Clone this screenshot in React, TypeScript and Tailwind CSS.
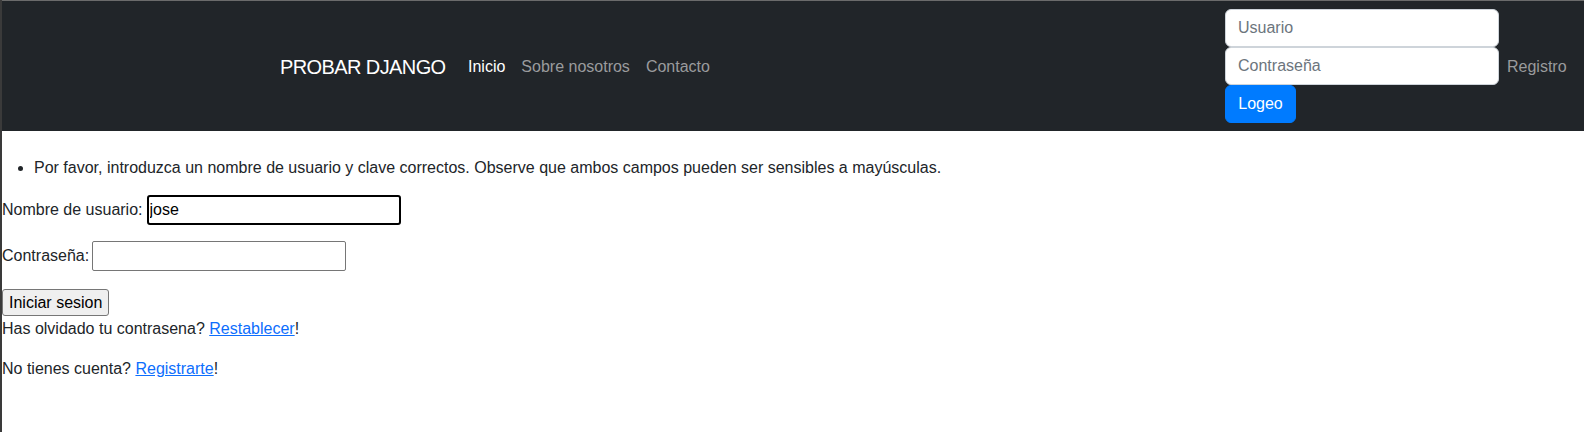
import React from 'react';

const FONT = { fontFamily: '"Liberation Sans", Arial, sans-serif' };

export default function App() {
  return (
    <div className="min-h-[432px] bg-white text-[#212529] text-[16px] leading-6 border-l-2 border-[#3a3a3a]" style={FONT}>
      <nav className="h-[131px] bg-[#212529] border-t border-[#6b6b6b] flex items-center justify-between pl-[278px] pr-[17px]">
        <div className="flex items-center mt-[2px]">
          <a className="w-[180px] shrink-0 whitespace-nowrap text-[20px] leading-[30px] tracking-[-0.6px] text-white">PROBAR DJANGO</a>
          <a className="px-2 text-white">Inicio</a>
          <a className="px-2 text-[#9a9b9d]">Sobre nosotros</a>
          <a className="px-2 text-[#9a9b9d]">Contacto</a>
        </div>
        <div className="flex items-center">
          <form className="flex flex-col w-[274px] items-start">
            <input
              placeholder="Usuario"
              className="w-full h-[38px] px-3 bg-white border border-[#ced4da] rounded-[6px] placeholder:text-[#6c757d] outline-none"
            />
            <input
              placeholder="Contraseña"
              type="password"
              className="w-full h-[38px] px-3 bg-white border border-[#ced4da] rounded-[6px] placeholder:text-[#6c757d] outline-none"
            />
            <button type="button" className="h-[38px] w-[71px] bg-[#007bff] border border-[#007bff] rounded-[6px] text-white">
              Logeo
            </button>
          </form>
          <a className="ml-2 mt-[2px] w-[60px] whitespace-nowrap text-[#9a9b9d]">Registro</a>
        </div>
      </nav>

      <ul className="list-disc pl-8 mt-[25px] mb-4">
        <li>Por favor, introduzca un nombre de usuario y clave correctos. Observe que ambos campos pueden ser sensibles a mayúsculas.</li>
      </ul>

      <p className="mb-4 -mt-[1px] flex items-center h-[30px]">
        <label>Nombre de usuario:</label>
        <input
          defaultValue="jose"
          className="ml-[4px] w-[254px] h-[30px] px-[1px] border-2 border-black rounded-[3px] outline-none text-black"
        />
      </p>

      <p className="mb-4 flex items-center h-[30px]">
        <label>Contraseña:</label>
        <input
          type="password"
          className="ml-[3px] w-[254px] h-[30px] px-[2px] border border-[#767676] rounded-[2px] outline-none"
        />
      </p>

      <button type="button" className="mt-[2px] h-[27px] px-[6px] bg-[#efefef] border border-[#767676] rounded-[3px] text-black leading-5">
        Iniciar sesion
      </button>
      <p className="mb-4 mt-[1px]">
        Has olvidado tu contrasena? <a className="text-[#0d6efd] underline">Restablecer</a>!
      </p>
      <p className="mb-4">
        No tienes cuenta? <a className="text-[#0d6efd] underline">Registrarte</a>!
      </p>
    </div>
  );
}
